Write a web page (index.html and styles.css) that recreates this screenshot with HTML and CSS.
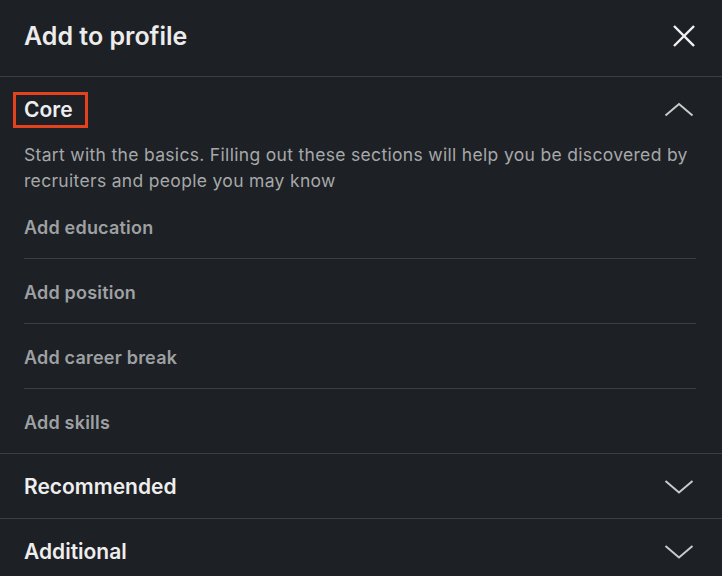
FILE: index.html
```html
<!DOCTYPE html>
<html lang="en">
<head>
<meta charset="utf-8">
<title>Add to profile</title>
<link rel="stylesheet" href="styles.css">
</head>
<body>
<div class="modal">
  <header class="modal-header">
    <h1 class="modal-title">Add to profile</h1>
    <button class="icon-btn close" aria-label="Close">
      <svg width="24" height="24" viewBox="0 0 24 24"><path d="M2 2 L22 22 M22 2 L2 22" stroke="currentColor" stroke-width="2.6" fill="none" stroke-linecap="square"/></svg>
    </button>
  </header>

  <section class="section open">
    <div class="section-head">
      <h2 class="section-title highlighted">Core</h2>
      <svg class="chev" width="30" height="16" viewBox="0 0 30 16"><path d="M1.5 14.5 L15 3 L28.5 14.5" stroke="currentColor" stroke-width="2" fill="none"/></svg>
    </div>
    <p class="section-desc">Start with the basics. Filling out these sections will help you be discovered by recruiters and people you may know</p>
    <ul class="item-list">
      <li class="item">Add education</li>
      <li class="item">Add position</li>
      <li class="item">Add career break</li>
      <li class="item">Add skills</li>
    </ul>
  </section>

  <section class="section">
    <div class="section-head">
      <h2 class="section-title">Recommended</h2>
      <svg class="chev" width="30" height="16" viewBox="0 0 30 16"><path d="M1.5 2 L15 13.5 L28.5 2" stroke="currentColor" stroke-width="2" fill="none"/></svg>
    </div>
  </section>

  <section class="section">
    <div class="section-head">
      <h2 class="section-title">Additional</h2>
      <svg class="chev" width="30" height="16" viewBox="0 0 30 16"><path d="M1.5 2 L15 13.5 L28.5 2" stroke="currentColor" stroke-width="2" fill="none"/></svg>
    </div>
  </section>
</div>
</body>
</html>
```

FILE: styles.css
```css
* { box-sizing: border-box; }
html, body {
  margin: 0;
  padding: 0;
  background: #1d2024;
  height: 100%;
  overflow: hidden;
}
body {
  font-family: Inter, "Noto Sans", "Liberation Sans", sans-serif;
  color: #e9e9e9;
  -webkit-font-smoothing: antialiased;
}
.modal {
  background: #1d2024;
  width: 722px;
  min-height: 576px;
}
.modal-header {
  height: 77px;
  padding: 0 24px;
  display: flex;
  align-items: center;
  justify-content: space-between;
  border-bottom: 1px solid #3b3e42;
}
.modal-title {
  margin: 0;
  font-size: 25px;
  font-weight: 600;
  color: #ececec;
  padding-bottom: 4px;
}
.icon-btn {
  background: none;
  border: 0;
  padding: 0;
  color: #f0f0f0;
  display: flex;
  margin-right: 3px;
  margin-bottom: 4px;
}
.close svg { width: 22px; height: 22px; }

.section {
  border-bottom: 1px solid #3b3e42;
}
.section:last-child { border-bottom: 0; }
.section-head {
  height: 64px;
  padding: 2px 28px 0 24px;
  display: flex;
  align-items: center;
  justify-content: space-between;
}
.open .section-head { height: 65px; padding-top: 0; }
.section-title {
  margin: 0;
  font-size: 21px;
  font-weight: 600;
  color: #eeeeee;
  line-height: 24px;
}
.highlighted {
  position: relative;
}
.highlighted::after {
  content: "";
  position: absolute;
  left: -11px;
  right: -15px;
  top: -6px;
  bottom: -6px;
  border: 3px solid #e4421f;
}
.chev {
  color: #c9cacb;
  width: 30px;
  height: 16px;
}
.open .section-head .chev { margin-top: -2px; }
.section-desc {
  margin: 0;
  padding: 0 24px;
  font-size: 17.5px;
  line-height: 26px;
  color: #a6a8aa;
  letter-spacing: 0.32px;
}
.item-list {
  list-style: none;
  margin: 0;
  padding: 0 26px 0 24px;
}
.item {
  height: 65px;
  display: flex;
  align-items: center;
  font-size: 18px;
  font-weight: 600;
  letter-spacing: 0.2px;
  color: #9ea0a3;
  border-bottom: 1px solid #3b3e42;
  padding-top: 2px;
}
.item:last-child { border-bottom: 0; height: 64px; padding-top: 2px; }
```
